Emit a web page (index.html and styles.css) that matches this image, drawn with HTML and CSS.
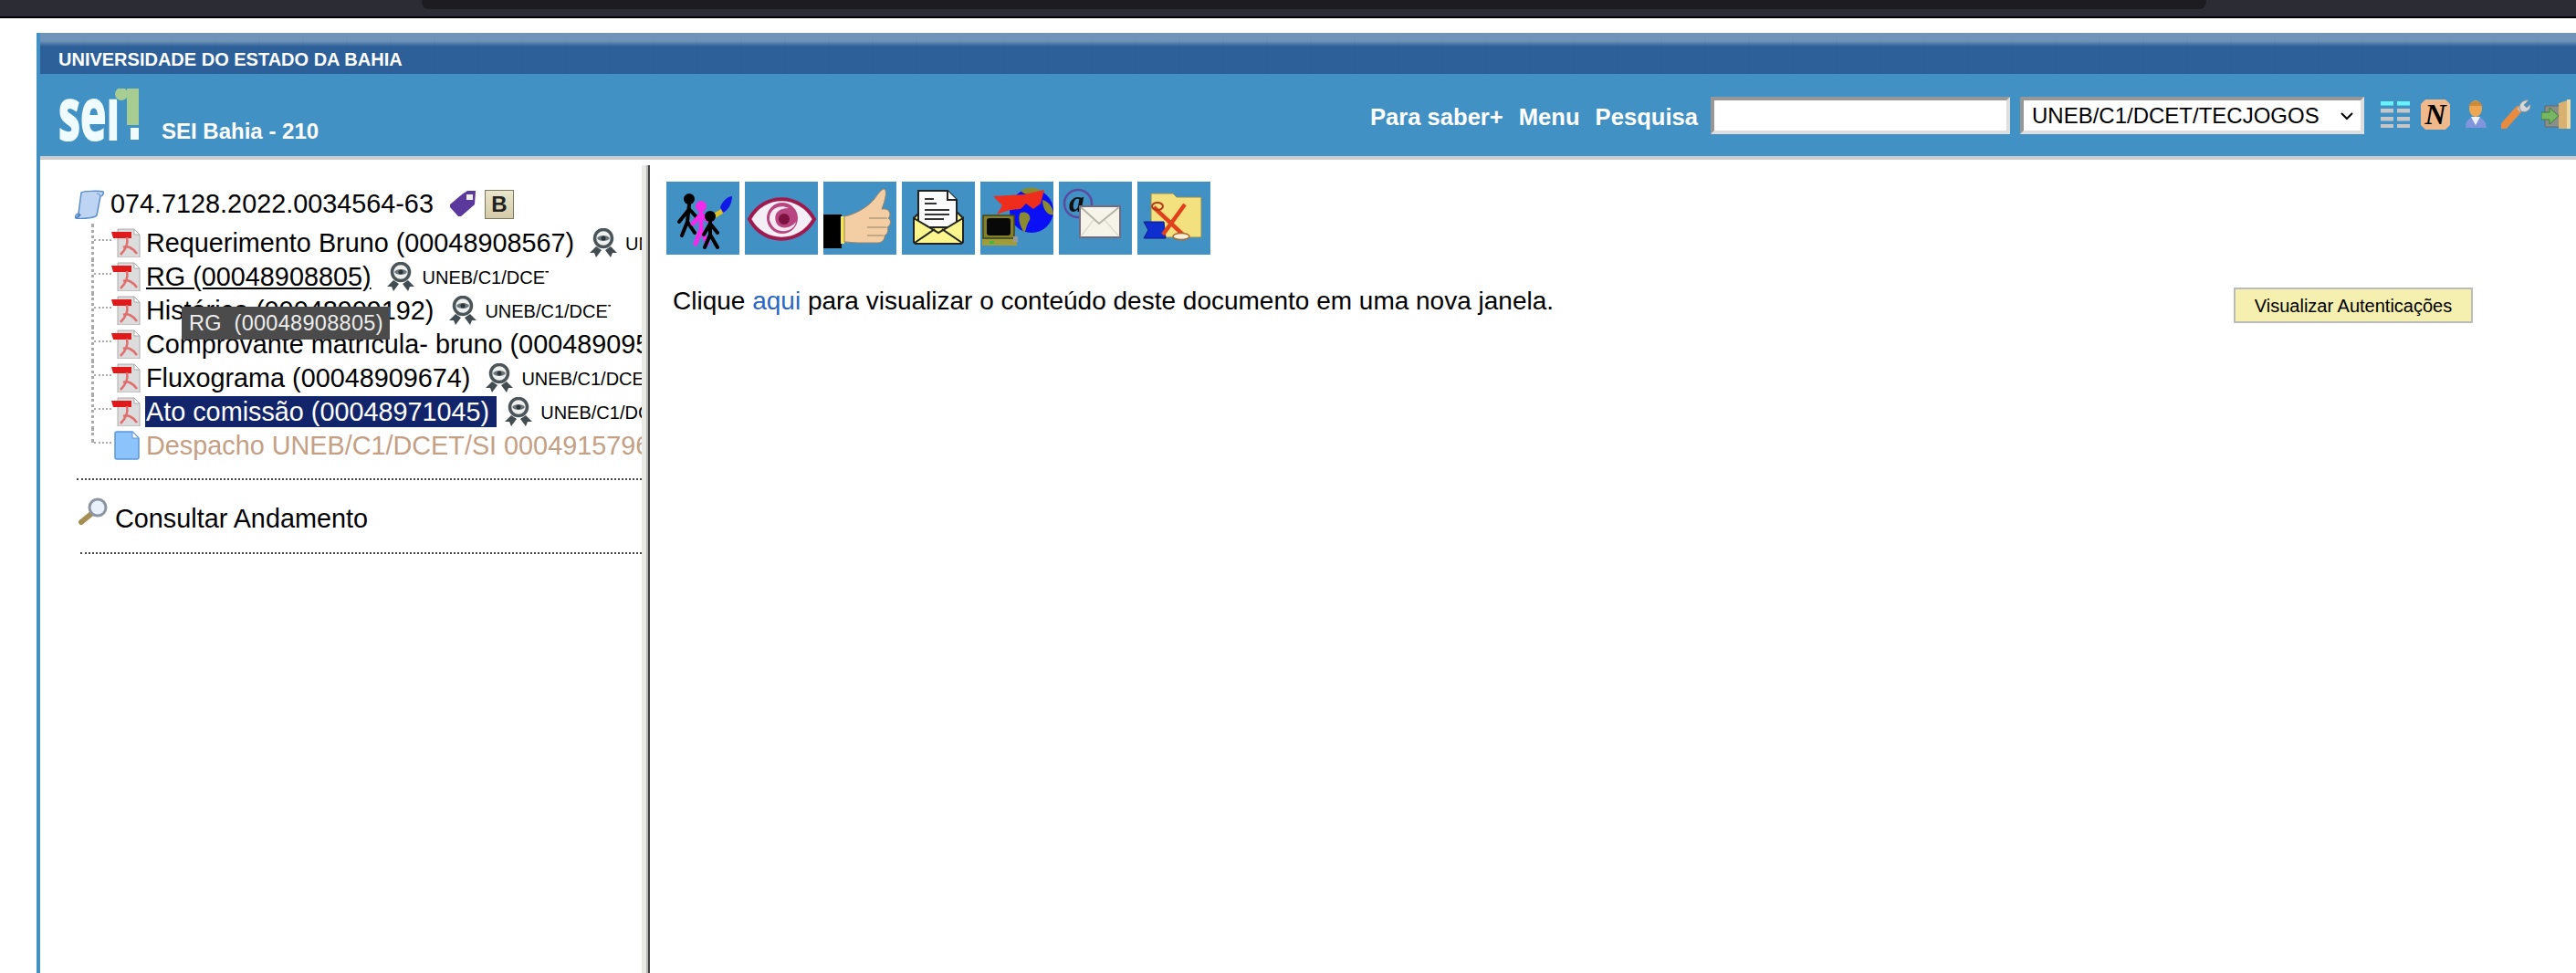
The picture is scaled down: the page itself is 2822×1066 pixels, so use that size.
FILE: index.html
```html
<!DOCTYPE html>
<html lang="pt-BR">
<head>
<meta charset="utf-8">
<title>SEI Bahia</title>
<link rel="stylesheet" href="styles.css">
</head>
<body>
<svg class="defs" xmlns="http://www.w3.org/2000/svg">
  <symbol id="i-pdf" viewBox="0 0 32 32">
    <path d="M7 1H25L31 7V32H7Z" fill="#dcdcdc" stroke="#aaa"/>
    <path d="M25 1V7H31Z" fill="#fff" stroke="#aaa"/>
    <path d="M0 4H22V11H2Z" fill="#e01a1a"/>
    <path d="M17 10C19 18 14 25 10 29M13 21C18 19 24 22 28 28" fill="none" stroke="#df6f6f" stroke-width="2.500"/>
  </symbol>
  <symbol id="i-award" viewBox="0 0 32 32">
    <circle cx="16" cy="11" r="9.500" fill="#eef0f0" stroke="#4b5559" stroke-width="3.500"/>
    <path d="M9 11C11 7 21 7 23 11C21 15 11 15 9 11Z" fill="#69757a"/>
    <circle cx="16" cy="11" r="2.500" fill="#2c3438"/>
    <path d="M8 20L1 27L6 27L8 32L14 24Z M24 20L31 27L26 27L24 32L18 24Z" fill="#414b50"/>
  </symbol>
  <symbol id="i-root" viewBox="0 0 32 32">
    <path d="M7 3C9 1 28 1 31 2C32 5 30 7 28 7L24 28C22 31 6 32 1 31C0 28 2 26 4 26Z" fill="#bdd5f3" stroke="#5c8dcb" stroke-width="1.500"/>
    <path d="M1 31C6 29 8 27 4 26" fill="#5c8dcb" stroke="#4a7cbc"/>
    <path d="M24 4C27 4 28 6 28 7" fill="none" stroke="#5c8dcb"/>
  </symbol>
  <symbol id="i-tag" viewBox="0 0 28 30">
    <path d="M28 1L27 16L12 29H9L0 19V16L13 5L19 1Z" fill="#5b389c"/>
    <rect x="18" y="5" width="7" height="6" fill="#eee"/>
  </symbol>
  <symbol id="i-doc" viewBox="0 0 32 32">
    <path d="M4 3Q4 1 6 1H23L30 8V29Q30 31 28 31H6Q4 31 4 29Z" fill="#8cc3fa" stroke="#5b97d8" stroke-width="1.500"/>
    <path d="M23 1V8H30Z" fill="#fff" stroke="#5b97d8"/>
  </symbol>
  <symbol id="i-lens" viewBox="0 0 32 32">
    <path d="M14 18L3 27" stroke="#a58f55" stroke-width="6" stroke-linecap="round"/>
    <circle cx="21" cy="11" r="9" fill="#e9f1fa" stroke="#8b96a2" stroke-width="3"/>
  </symbol>
</svg>

<div class="os-bar"><div class="os-tab"></div></div>

<div class="frame">
  <header class="head">
    <div class="org-strip"><span class="org-name">UNIVERSIDADE DO ESTADO DA BAHIA</span></div>
    <div class="nav">
      <div class="brand">
        <svg class="logo" viewBox="0 0 88 58" xmlns="http://www.w3.org/2000/svg">
          <rect x="75" y="0" width="13" height="40" fill="#a7cd92"/>
          <circle cx="69" cy="6" r="7" fill="#a7cd92"/>
          <rect x="79" y="43" width="9" height="13" fill="#f0fbfd"/>
          <text class="logo-text" transform="translate(0 56) scale(.86 1.42)" x="0" y="0">seı</text>
        </svg>
        <span class="sys-name">SEI Bahia - 210</span>
      </div>
      <div class="tools">
        <a class="nav-link">Para saber+</a>
        <a class="nav-link">Menu</a>
        <a class="nav-link">Pesquisa</a>
        <input class="search" type="text">
        <div class="unit">
          <select class="unit-select"><option>UNEB/C1/DCET/TECJOGOS</option></select>
          <svg class="chev" viewBox="0 0 14 9"><path d="M1 1L7 7L13 1" fill="none" stroke="#000" stroke-width="2"/></svg>
        </div>
        <div class="nav-icons">
          <svg class="nav-icon" viewBox="0 0 32 32">
            <path d="M0 2H14V6.500H0ZM18 2H32V6.500H18Z" fill="#67f3fb"/>
            <path d="M0 10H14V14.500H0ZM18 10H32V14.500H18ZM0 19H14V23.500H0ZM18 19H32V23.500H18ZM0 27H14V31H0ZM18 27H32V31H18Z" fill="#c4c6c8"/>
          </svg>
          <span class="n-badge">N</span>
          <svg class="nav-icon" viewBox="0 0 32 32">
            <path d="M5 31C5 22 10 19 16 19C22 19 27 22 28 31Z" fill="#7f96dc"/>
            <path d="M11 19L16 28L21 19Z" fill="#eef2fb"/>
            <ellipse cx="16" cy="10" rx="7" ry="9" fill="#eea652"/>
            <path d="M9 7C10 0 22 0 23 7Z" fill="#c98a39"/>
          </svg>
          <svg class="nav-icon" viewBox="0 0 32 32">
            <path d="M3 29L19 11" stroke="#e98b3e" stroke-width="8" stroke-linecap="round"/>
            <path d="M19 12L22 9" stroke="#bfc3c6" stroke-width="5"/>
            <path d="M20 9C20 4 24 0 30 1L25 6L28 9L32 5C33 11 28 15 22 13Z" fill="#d5d8da" stroke="#8e9396"/>
          </svg>
          <svg class="nav-icon" viewBox="0 0 32 32">
            <path d="M4 7H24V30H4Z" fill="#8a8f88" stroke="#666"/>
            <path d="M19 4L32 0V32H19Z" fill="#d8b070"/>
            <path d="M28 0H32V32H28Z" fill="#eed8a6"/>
            <path d="M0 14H9V9L19 18L9 27V22H0Z" fill="#76b761" stroke="#3f7a3c"/>
          </svg>
        </div>
      </div>
    </div>
  </header>

  <main class="main">
    <aside class="tree-panel">
      <div class="root-row">
        <svg class="ico"><use href="#i-root"/></svg>
        <span class="root-no">074.7128.2022.0034564-63</span>
        <svg class="tag-ico"><use href="#i-tag"/></svg>
        <span class="b-badge">B</span>
      </div>
      <ul class="tree">
        <li class="row"><svg class="ico"><use href="#i-pdf"/></svg><a class="name">Requerimento Bruno (00048908567)</a><svg class="ico award"><use href="#i-award"/></svg><span class="unit-tag">UNEB/C1/DCET</span></li>
        <li class="row"><svg class="ico"><use href="#i-pdf"/></svg><a class="name hover">RG (00048908805)</a><svg class="ico award"><use href="#i-award"/></svg><span class="unit-tag">UNEB/C1/DCET</span></li>
        <li class="row"><svg class="ico"><use href="#i-pdf"/></svg><a class="name">Histórico (00048909192)</a><svg class="ico award"><use href="#i-award"/></svg><span class="unit-tag">UNEB/C1/DCET</span></li>
        <li class="row"><svg class="ico"><use href="#i-pdf"/></svg><a class="name">Comprovante matrícula- bruno (00048909555)</a></li>
        <li class="row"><svg class="ico"><use href="#i-pdf"/></svg><a class="name">Fluxograma (00048909674)</a><svg class="ico award"><use href="#i-award"/></svg><span class="unit-tag">UNEB/C1/DCET</span></li>
        <li class="row"><svg class="ico"><use href="#i-pdf"/></svg><a class="name selected">Ato comissão (00048971045)</a><svg class="ico award"><use href="#i-award"/></svg><span class="unit-tag">UNEB/C1/DCET</span></li>
        <li class="row last"><svg class="ico"><use href="#i-doc"/></svg><a class="name draft">Despacho UNEB/C1/DCET/SI 00049157960</a></li>
      </ul>
      <div class="tooltip">RG  (00048908805)</div>
      <div class="history">
        <svg class="ico"><use href="#i-lens"/></svg>
        <span class="history-text">Consultar Andamento</span>
      </div>
      <div class="end-rule"></div>
    </aside>
    <div class="splitter"></div>
    <section class="content">
      <div class="toolbar">
        <button class="tb-btn"><svg viewBox="0 0 80 80">
          <g stroke-linecap="round" fill="none" stroke-width="4">
            <g stroke="#000"><path d="M25 25L23 44M25 30L14 44M25 30L34 40M23 44L17 59M23 44L31 56"/></g>
            <g stroke="#f22bea" stroke-width="5"><path d="M38 33V52M38 36L29 46M38 36L48 44M38 52L32 68M38 52L45 68"/></g>
            <g stroke="#000"><path d="M48 44V58M48 46L41 58M48 46L56 56M48 58L42 72M48 58L56 72"/></g>
            <path d="M50 39L60 33" stroke="#e0c020" stroke-width="5"/>
          </g>
          <circle cx="25" cy="19" r="6" fill="#000"/>
          <circle cx="38" cy="27" r="6" fill="#f22bea"/>
          <circle cx="48" cy="38" r="6" fill="#000"/>
          <path d="M59 28C62 20 68 16 72 16C72 24 68 31 62 34Z" fill="#1019e8"/>
        </svg></button>
        <button class="tb-btn"><svg viewBox="0 0 80 80">
          <path d="M5 41C20 12 60 12 76 41C60 70 20 70 5 41Z" fill="#f4eef6" stroke="#a01a4e" stroke-width="4"/>
          <circle cx="41" cy="40" r="17" fill="#b8457f"/>
          <path d="M27 42C26 30 38 24 48 29C38 29 31 34 34 44C37 53 50 52 56 44C54 56 32 60 27 42Z" fill="#f5eaf2"/>
          <circle cx="43" cy="41" r="6" fill="#7c123f"/>
        </svg></button>
        <button class="tb-btn"><svg viewBox="0 0 80 80">
          <path d="M0 36H20V73H0Z" fill="#000"/>
          <rect x="19" y="38" width="4" height="30" fill="#f6e64a"/>
          <path d="M23 38C35 36 48 28 55 20C60 14 63 8 67 8C70 10 68 20 64 30H68C74 31 74 38 71 40C75 42 74 48 70 50C72 53 70 58 67 59C68 63 64 67 60 67H38C32 67 28 66 23 66Z" fill="#f3cda3" stroke="#9a8264" stroke-width="1"/>
          <path d="M50 40H70M48 50H69M48 59H66" stroke="#b59a7a" stroke-width="1.500" fill="none"/>
        </svg></button>
        <button class="tb-btn"><svg viewBox="0 0 80 80">
          <path d="M13 40L20 33H60L67 40V66L65 68H15L13 66Z" fill="#faf58c" stroke="#222" stroke-width="2"/>
          <path d="M18 10H50L60 20V50H18Z" fill="#fafafa" stroke="#222" stroke-width="2"/>
          <path d="M50 10V20H60" fill="#fff" stroke="#222" stroke-width="2"/>
          <path d="M25 19H35M25 24H38M25 31H52M25 36H52M25 41H46" stroke="#333" stroke-width="2.200"/>
          <path d="M13 40L40 56L67 40V66L65 68H15L13 66Z" fill="#faf58c" stroke="#222" stroke-width="2"/>
          <path d="M14 67L36 52M66 67L44 52" stroke="#222" stroke-width="2" fill="none"/>
        </svg></button>
        <button class="tb-btn"><svg viewBox="0 0 80 80">
          <circle cx="56" cy="32" r="24" fill="#0b10f4"/>
          <path d="M44 10C52 5 62 6 66 10C60 16 50 16 44 10ZM68 20C76 22 80 30 80 36C74 38 68 30 68 20ZM44 34C50 32 56 36 54 42C50 48 50 54 48 56C44 50 40 40 44 34Z" fill="#8a8a30"/>
          <path d="M14 16L48 14L70 9L66 24L58 30L50 24L44 30C36 30 26 32 18 36L24 26L14 16Z" fill="#ef2d1c"/>
          <path d="M3 37H37V62H3Z" fill="#84802a" stroke="#45430f" stroke-width="1.500"/>
          <rect x="7" y="40" width="26" height="19" rx="3" fill="#080808"/>
          <path d="M2 63H40V70H2Z" fill="#a09c3a"/>
          <rect x="10" y="65" width="5" height="3" fill="#3bbb3b"/>
          <rect x="36" y="60" width="5" height="6" fill="#999"/>
        </svg></button>
        <button class="tb-btn"><svg viewBox="0 0 80 80">
          <circle cx="21" cy="24" r="15" fill="none" stroke="#5b4aa0" stroke-width="2.500"/>
          <text class="at-text" x="11" y="33">a</text>
          <path d="M23 27H67V61H23Z" fill="#f6f4e8" stroke="#6e6a80" stroke-width="2"/>
          <path d="M24 28L44 46L66 28" fill="none" stroke="#b5b3a8" stroke-width="2"/>
          <path d="M24 60L38 42M66 60L50 42" fill="none" stroke="#dedbd0" stroke-width="1.500"/>
        </svg></button>
        <button class="tb-btn"><svg viewBox="0 0 80 80">
          <path d="M15 13H39L43 17H70V61H15Z" fill="#f2e17e" stroke="#8d8a55" stroke-width="1"/>
          <path d="M7 44H29L31 62H7L12 53Z" fill="#0f2ed0" stroke="#0a1a80"/>
          <path d="M18 28L52 60M52 25L28 58" stroke="#e0401c" stroke-width="4.500"/>
          <ellipse cx="22" cy="27" rx="6" ry="4" fill="none" stroke="#b03a1a" stroke-width="2"/>
          <ellipse cx="48" cy="60" rx="9" ry="3.500" fill="#f5efd8" stroke="#a86a30" stroke-width="1.500"/>
        </svg></button>
      </div>
      <div class="doc-line">
        <p class="doc-msg">Clique <a class="link">aqui</a> para visualizar o conteúdo deste documento em uma nova janela.</p>
        <button class="auth-btn">Visualizar Autenticações</button>
      </div>
    </section>
  </main>
</div>
</body>
</html>
```
FILE: styles.css
```css
* { box-sizing: border-box; }
html, body { margin: 0; padding: 0; height: 1066px; overflow: hidden; background: #fff; }
body { font-family: "Liberation Sans", Arial, sans-serif; color: #000; }

.defs { display: none; }

.os-bar { height: 20px; background: #2c2c34; border-bottom: 2px solid #000; padding: 0 405px 0 462px; }
.os-tab { height: 10px; background: #1c1c21; border-radius: 0 0 8px 8px; }

.frame { margin: 16px 0 0 40px; height: 1030px; border-left: 4px solid #4291c4; display: flex; flex-direction: column; }

.head { flex: none; margin-left: 0; }
.org-strip {
  height: 45px; padding: 18px 0 0 20px;
  background: repeating-linear-gradient(90deg, transparent 0 47px, rgba(0,0,0,.025) 47px 48px),
              linear-gradient(#7194b9 0, #6f92b8 9px, #2d5f98 15px);
}
.org-name { display: block; font-size: 20px; line-height: 22px; font-weight: 700; color: #fff; }
.nav { height: 94px; background: #4291c4; border-bottom: 4px solid #ccc; padding: 16px 6px 0 20px; display: flex; justify-content: space-between; align-items: flex-start; }
.brand { display: flex; align-items: flex-end; height: 58px; }
.logo { width: 88px; height: 58px; display: block; filter: blur(.5px); }
.logo-text { font-family: "Open Sans", sans-serif; font-weight: 700; font-size: 56px; fill: #f0fbfd; stroke: #f0fbfd; stroke-width: 1.500px; }
.sys-name { margin: 0 0 -3px 25px; font-size: 24px; line-height: 28px; font-weight: 700; color: #fff; }

.tools { display: flex; align-items: flex-start; padding-top: 9px; }
.nav-link { font-size: 25.600px; line-height: 32px; font-weight: 700; color: #fff; margin: 6px 17px 0 0; }
.nav-link:nth-child(3) { margin-right: 14px; }
.search { width: 328px; height: 41px; margin: 0 11px 0 0; border: 4px solid; border-color: #979797 #dedede #dedede #979797; background: #fff; padding: 0; outline: 0; }
.unit { width: 377px; height: 41px; position: relative; margin-right: 18px; }
.unit-select {
  appearance: none; -webkit-appearance: none; width: 100%; height: 100%;
  border: 4px solid; border-color: #979797 #dedede #dedede #979797; border-radius: 0;
  background: #fff; padding: 0 0 0 9px; font-family: "Liberation Sans", Arial, sans-serif; font-size: 24px; color: #000;
}
.chev { position: absolute; right: 12px; top: 17px; width: 14px; height: 9px; }
.nav-icons { display: flex; gap: 12px; margin-top: 3px; }
.nav-icon { width: 32px; height: 32px; display: block; }
.n-badge {
  width: 32px; height: 33px; background: #f0b98c; color: #000;
  clip-path: polygon(5px 0, 27px 0, 32px 5px, 32px 28px, 27px 33px, 5px 33px, 0 28px, 0 5px);
  font-family: "Liberation Serif", serif; font-weight: 700; font-style: italic; font-size: 32px; line-height: 33px; text-align: center;
}

.main { flex: 1; display: flex; min-height: 0; }
.tree-panel { width: 659px; flex: none; overflow: hidden; padding: 33px 0 0 38px; position: relative; }
.ico { width: 32px; height: 32px; flex: none; display: block; }

.root-row { display: flex; align-items: flex-start; height: 42px; }
.root-no { font-size: 28.800px; line-height: 33px; margin: -1px 0 0 7px; white-space: nowrap; }
.tag-ico { width: 28px; height: 30px; margin-left: 18px; flex: none; }
.b-badge { width: 32px; height: 32px; margin-left: 10px; flex: none; background: linear-gradient(#ebe5cc, #d2caa8); border: 1px solid #7d7860; font-size: 24px; font-weight: 700; line-height: 30px; text-align: center; color: #222; }

.tree { list-style: none; margin: 0; padding: 0 0 0 40px; }
.row { display: flex; height: 37px; align-items: flex-start; position: relative; white-space: nowrap; }
.row::before { content: ""; position: absolute; left: -22px; top: -5px; bottom: 0; border-left: 3px dotted #aaa; }
.row::after { content: ""; position: absolute; left: -19px; top: 12px; width: 19px; border-top: 2px dotted #aaa; }
.row.last::before { bottom: 24px; }
.name { flex: none; margin: -1px 0 0 5px; padding: 0 8px 0 1px; height: 34px; font-size: 28.800px; line-height: 34px; color: #000; }
.name.hover { text-decoration: underline; }
.name.selected { background: #12246a; color: #fff; }
.name.draft { color: #c4a085; }
.award { margin-left: 8px; }
.unit-tag { flex: none; width: 138px; overflow: hidden; margin: 3px 0 0 8px; font-size: 20px; line-height: 28px; }

.tooltip { position: absolute; left: 155px; top: 161px; width: 228px; height: 36px; padding: 0 8px; background: #4b4b4b; color: #eee; font-size: 23.500px; line-height: 36px; letter-spacing: .3px; white-space: pre; }

.history { margin: 15px 0 0 2px; padding: 19px 0 0 2px; height: 81px; border-top: 2px dotted #444; display: flex; align-items: flex-start; }
.history-text { font-size: 28.800px; line-height: 33px; margin: 7px 0 0 8px; white-space: nowrap; }
.end-rule { margin-left: 6px; border-top: 2px dotted #444; }

.splitter { width: 9px; flex: none; margin-top: 6px; background: linear-gradient(90deg, #e9e9e5 0 5px, #b5b5b5 5px 7px, #444 7px 9px); }

.content { flex: 1; padding: 24px 0 0 18px; min-width: 0; }
.toolbar { display: flex; gap: 6px; }
.tb-btn { width: 80px; height: 80px; padding: 0; border: 0; background: #4291c4; display: block; }
.tb-btn svg { width: 80px; height: 80px; display: block; filter: blur(.5px); }
.at-text { font-family: "Liberation Serif", serif; font-style: italic; font-weight: 700; font-size: 34px; fill: #111; }

.doc-line { display: flex; justify-content: space-between; align-items: flex-start; margin-top: 36px; padding: 0 113px 0 7px; }
.doc-msg { margin: -2px 0 0; font-size: 28px; line-height: 33px; }
.link { color: #2b66c4; }
.auth-btn { width: 262px; height: 39px; padding: 2px 0 0; border: 2px solid #bbb; background: #f6f0b0; font-family: "Liberation Sans", Arial, sans-serif; font-size: 20px; color: #000; border-radius: 0; }
```
